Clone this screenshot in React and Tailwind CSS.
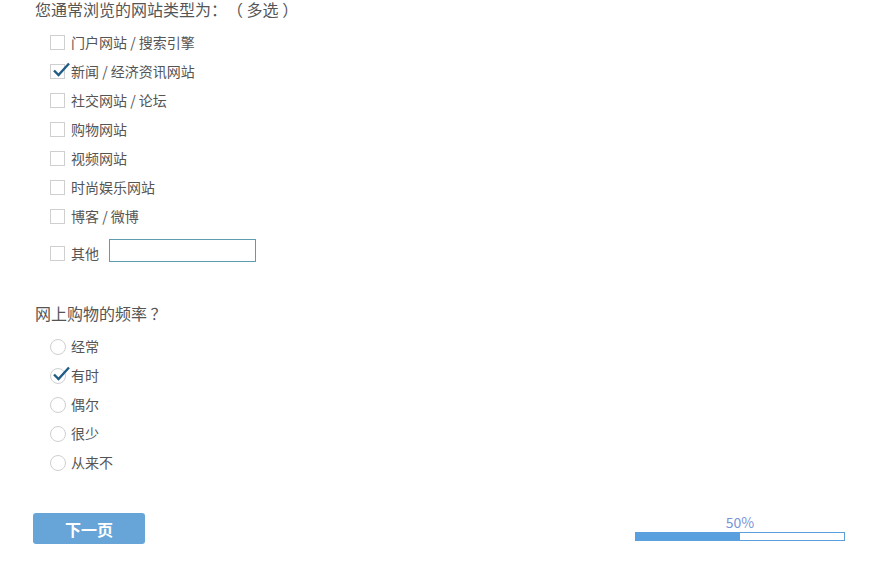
import React, { useState } from "react";

const sites = [
  "门户网站 / 搜索引擎",
  "新闻 / 经济资讯网站",
  "社交网站 / 论坛",
  "购物网站",
  "视频网站",
  "时尚娱乐网站",
  "博客 / 微博",
];

const freqs = ["经常", "有时", "偶尔", "很少", "从来不"];

const Check = () => (
  <svg className="absolute left-[1px] top-[-3px]" width="18" height="16" viewBox="0 0 18 16">
    <path d="M2 8.5 L6.5 13 L17 1.5" fill="none" stroke="#1f5d87" strokeWidth="2.4" />
  </svg>
);

const Box = ({ round, checked }) => (
  <span className={`relative block w-[15px] h-[15px] border border-[#cfcfcf] bg-white shrink-0 ${round ? "rounded-full w-[16px] h-[16px]" : ""}`}>
    {checked && <Check />}
  </span>
);

export default function App() {
  const [picked, setPicked] = useState([1]);
  const [freq, setFreq] = useState(1);

  const toggle = (i) => setPicked(p => p.includes(i) ? p.filter(x => x !== i) : [...p, i]);

  return (
    <div className="w-[869px] h-[568px] bg-white text-[#555] relative [text-spacing-trim:space-all]" style={{ fontFamily: '"Microsoft YaHei", "Noto Sans CJK SC", sans-serif' }}>
      <div className="pl-[35px]">
        <p className="text-[16px] leading-[18px]">您通常浏览的网站类型为：（ 多选 ）</p>
        <div className="pl-[15px] mt-[10px]">
          {sites.map((s, i) => (
            <div key={s} className="h-[29px] flex items-center gap-[6px] text-[14px] cursor-pointer" onClick={() => toggle(i)}>
              <Box checked={picked.includes(i)} />
              <span>{s}</span>
            </div>
          ))}
          <div className="h-[31px] flex items-end gap-[6px] text-[14px]">
            <span className="mb-[1px]"><Box /></span>
            <span className="leading-[18px]">其他</span>
            <input className="ml-[4px] w-[147px] h-[23px] border border-solid border-[#5f9bb0] bg-white outline-none" />
          </div>
        </div>

        <p className="text-[16px] leading-[20px] mt-[41px]">网上购物的频率 ？</p>
        <div className="pl-[15px] mt-[9px]">
          {freqs.map((f, i) => (
            <div key={f} className="h-[29px] flex items-center gap-[5px] text-[14px] cursor-pointer" onClick={() => setFreq(i)}>
              <Box round checked={freq === i} />
              <span>{f}</span>
            </div>
          ))}
        </div>
      </div>

      <div className="absolute left-[33px] top-[513px] right-[24px] flex items-start justify-between">
        <button className="w-[112px] h-[31px] rounded-[3px] bg-[#67a5d8] text-white text-[16px] font-bold">下一页</button>
        <div className="w-[210px] flex flex-col items-center">
          <span className="text-[14px] leading-[16px] text-[#7b93d6] mt-[1px]">50%</span>
          <div className="w-full h-[9px] border border-[#5ba0de] bg-white mt-[2px]">
            <div className="h-full w-1/2 bg-[#5ba0de]"></div>
          </div>
        </div>
      </div>
    </div>
  );
}
